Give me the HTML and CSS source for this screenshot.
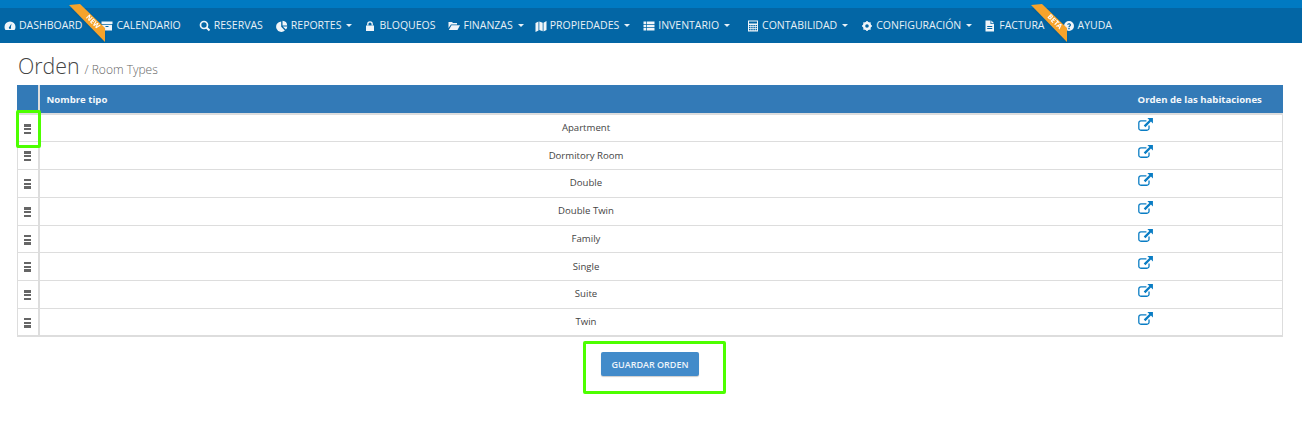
FILE: index.html
```html
<!DOCTYPE html>
<html lang="es">
<head>
<meta charset="utf-8">
<title>Orden</title>
<link rel="stylesheet" href="styles.css">
</head>
<body>
<svg class="defs" width="0" height="0">
<defs>
<symbol id="link" viewBox="0 0 16 14"><path d="M11.800 8v3a2.200 2.200 0 0 1-2.200 2.200H3A2.200 2.200 0 0 1 .8 11V5.400A2.200 2.200 0 0 1 3 3.200h6" fill="none" stroke="currentColor" stroke-width="1.400"/><path d="M10 0h6v6l-2.100-2.100-6 6-1.800-1.800 6-6z" fill="currentColor"/></symbol>
</defs>
</svg>
<div class="strip"></div>
<nav class="nav">
<a class="item i-dash"><svg class="ic" viewBox="0 0 12 12"><path d="M6 1.500a5.500 5.500 0 0 0-5.500 5.500c0 1.200.4 2.200 1 3h9c.6-.8 1-1.800 1-3A5.500 5.500 0 0 0 6 1.500zM6 9a1.200 1.200 0 0 1-.6-2.200L7.500 3.500 6.900 7.200A1.200 1.200 0 0 1 6 9z" fill="currentColor" fill-rule="evenodd"/></svg>DASHBOARD</a>
<a class="item i-cal"><svg class="ic" viewBox="0 0 12 12"><path d="M.5 1.500h11v2.500H.5zM1 4.800h10v5.700H1zM4.500 6v1h3V6z" fill="currentColor" fill-rule="evenodd"/></svg>CALENDARIO</a>
<a class="item i-res"><svg class="ic" viewBox="0 0 12 12"><circle cx="5" cy="5" r="3.500" fill="none" stroke="currentColor" stroke-width="1.700"/><path d="M7.500 7.500l3 3" stroke="currentColor" stroke-width="2"/></svg>RESERVAS</a>
<a class="item i-rep"><svg class="ic" viewBox="0 0 12 12"><path d="M5.200 1.500v5.300l3.700 3.700A5.200 5.200 0 1 1 5.200 1.500zM6.500.8a5 5 0 0 1 4.700 4.700H6.500zM6.800 6.500h4.500a5 5 0 0 1-1.400 3.100z" fill="currentColor"/></svg>REPORTES<i class="caret"></i></a>
<a class="item i-blo"><svg class="ic" viewBox="0 0 12 12"><path d="M2 5.500h8v5.500H2z" fill="currentColor"/><path d="M3.800 5.500V4a2.200 2.200 0 0 1 4.400 0v1.500" fill="none" stroke="currentColor" stroke-width="1.300"/></svg>BLOQUEOS</a>
<a class="item i-fin"><svg class="ic" viewBox="0 0 12 12"><path d="M.5 2h3.500l1 1h4v1.500H3L.5 8zM3.500 5.200H12L9.500 10H.8z" fill="currentColor"/></svg>FINANZAS<i class="caret"></i></a>
<a class="item i-pro"><svg class="ic" viewBox="0 0 12 12"><path d="M.5 3l3-1.500v9L.5 12zM4.300 1.500l3.400 1.300v8.500l-3.400-1.200zM8.500 2.800L11.500 1v9l-3 1.500z" fill="currentColor"/></svg>PROPIEDADES<i class="caret"></i></a>
<a class="item i-inv"><svg class="ic" viewBox="0 0 12 12"><path d="M.5 1.500h2.800v2.500H.5zM4 1.500h7.500v2.500H4zM.5 4.800h2.800v2.500H.5zM4 4.800h7.500v2.500H4zM.5 8h2.800v2.500H.5zM4 8h7.500v2.500H4z" fill="currentColor"/></svg>INVENTARIO<i class="caret"></i></a>
<a class="item i-con"><svg class="ic" viewBox="0 0 12 12"><path d="M1 .5h10v11H1zM2 1.500v2h8v-2zM2 5v1.200h1.500V5zM4.200 5v1.200h1.500V5zM6.400 5v1.200h1.500V5zM8.600 5v1.200H10V5zM2 7v1.200h1.500V7zM4.200 7v1.200h1.500V7zM6.400 7v1.200h1.500V7zM8.600 7v1.200H10V7zM2 9v1.200h1.500V9zM4.200 9v1.200h1.500V9zM6.400 9v1.200h1.500V9zM8.600 9v1.200H10V9z" fill="currentColor" fill-rule="evenodd"/></svg>CONTABILIDAD<i class="caret"></i></a>
<a class="item i-cfg"><svg class="ic" viewBox="0 0 12 12"><circle cx="6" cy="6" r="3" fill="none" stroke="currentColor" stroke-width="2.400"/><path d="M6 1v10M1 6h10M2.500 2.500l7 7M9.500 2.500l-7 7" stroke="currentColor" stroke-width="1.500" stroke-dasharray="2 6"/></svg>CONFIGURACIÓN<i class="caret"></i></a>
<a class="item i-fac"><svg class="ic" viewBox="0 0 12 12"><path d="M1.500.5h5v3.500H10v7.500H1.500zM7.300.5L10 3.200H7.300zM3.200 6v1h5.100V6zM3.200 8v1h5.100V8z" fill="currentColor" fill-rule="evenodd"/></svg>FACTURA</a>
<a class="item i-ayu"><svg class="ic" viewBox="0 0 12 12"><path d="M6 1a5 5 0 1 0 0 10A5 5 0 0 0 6 1zM5.300 9.200V8h1.400v1.200zM6.700 7.200H5.300c0-1.500 1.400-1.500 1.400-2.300 0-.8-1.100-.8-1.700 0l-.9-.7c1.100-1.500 3.900-1.100 3.900.7 0 1.300-1.300 1.300-1.300 2.300z" fill="currentColor" fill-rule="evenodd"/></svg>AYUDA</a>
<span class="shadow s-new"><span class="ribbon"><span class="rib-text">NEW</span></span></span>
<span class="shadow s-beta"><span class="ribbon"><span class="rib-text">BETA</span></span></span>
</nav>
<main class="page">
<h1 class="title">Orden <small>/ Room Types</small></h1>
<table class="grid">
<thead><tr><th class="h"></th><th class="name-h">Nombre tipo</th><th class="ord-h">Orden de las habitaciones</th></tr></thead>
<tbody>
<tr><td class="h"><i class="bars"></i></td><td class="name">Apartment</td><td class="ord"><svg class="ext"><use href="#link"/></svg></td></tr>
<tr><td class="h"><i class="bars"></i></td><td class="name">Dormitory Room</td><td class="ord"><svg class="ext"><use href="#link"/></svg></td></tr>
<tr><td class="h"><i class="bars"></i></td><td class="name">Double</td><td class="ord"><svg class="ext"><use href="#link"/></svg></td></tr>
<tr><td class="h"><i class="bars"></i></td><td class="name">Double Twin</td><td class="ord"><svg class="ext"><use href="#link"/></svg></td></tr>
<tr><td class="h"><i class="bars"></i></td><td class="name">Family</td><td class="ord"><svg class="ext"><use href="#link"/></svg></td></tr>
<tr><td class="h"><i class="bars"></i></td><td class="name">Single</td><td class="ord"><svg class="ext"><use href="#link"/></svg></td></tr>
<tr><td class="h"><i class="bars"></i></td><td class="name">Suite</td><td class="ord"><svg class="ext"><use href="#link"/></svg></td></tr>
<tr><td class="h"><i class="bars"></i></td><td class="name">Twin</td><td class="ord"><svg class="ext"><use href="#link"/></svg></td></tr>
</tbody>
</table>
<div class="actions"><button class="save">GUARDAR ORDEN</button></div>
</main>
<div class="mark m-handle"></div>
<div class="mark m-save"></div>
</body>
</html>
```
FILE: styles.css
```css
html, body { margin: 0; padding: 0; }
body { background: #fff; font-family: "Open Sans", sans-serif; color: #555; overflow: hidden; height: 436px; position: relative; }
.defs { position: absolute; }
.strip { height: 8px; background: #007ac2; }
.nav { height: 35px; background: #0366a5; display: flex; align-items: center; position: relative; padding-left: 4px; }
.item { display: flex; align-items: center; color: #e8f1f7; font-size: 10.5px; line-height: 35px; white-space: nowrap; }
.ic { width: 12px; height: 12px; margin-right: 3px; flex: none; color: #f0f5f9; }
.caret { width: 0; height: 0; border-left: 3px solid transparent; border-right: 3px solid transparent; border-top: 3px solid #e8f1f7; margin-left: 5px; }
.i-cal { margin-left: 19px; }
.i-res { margin-left: 18px; }
.i-rep { margin-left: 13px; }
.i-blo { margin-left: 12px; }
.i-fin { margin-left: 13px; }
.i-pro { margin-left: 11px; }
.i-inv { margin-left: 13px; }
.i-con { margin-left: 17px; }
.i-cfg { margin-left: 13px; }
.i-fac { margin-left: 12px; }
.i-ayu { margin-left: 18px; }
.shadow { position: absolute; top: -4px; width: 36px; height: 42px; filter: drop-shadow(0 1px 1px rgba(0,0,0,.12)); }
.s-new { left: 69px; }
.s-beta { left: 1031px; }
.ribbon { display: block; position: relative; width: 36px; height: 38px; background: #f6a32b; clip-path: polygon(0 1px, 11px 0, 36px 24px, 36px 38px); }
.rib-text { position: absolute; left: 8px; top: 13px; width: 32px; text-align: center; color: #fff; font-size: 7px; font-weight: 700; line-height: 9px; transform: rotate(45deg); }
.page { padding: 0 19px 0 17px; }
.title { display: flex; align-items: baseline; gap: 5px; box-sizing: border-box; height: 42px; margin: 0; font-weight: 300; font-size: 21.300px; line-height: 30px; padding: 8px 0 0 1px; color: #444; }
.title small { font-size: 12px; color: #666; font-weight: 300; }
.grid { width: 1266px; border-collapse: collapse; table-layout: fixed; font-size: 9.600px; }
.grid th { background: #337ab7; color: #f4f8fb; font-size: 9.600px; font-weight: 700; text-align: left; height: 29px; padding: 0 7px; border-bottom: 2px solid #ddd; box-sizing: border-box; }
.grid th.h { width: 21px; border-right: 2px solid #ddd; border-left: 1px solid #337ab7; }
.grid th.ord-h { width: 150px; padding-left: 5px; }
.grid td { height: 27.750px; box-sizing: border-box; border-bottom: 1px solid #ddd; padding: 0; }
.grid tr:last-child td { border-bottom-width: 2px; }
td.h { border-left: 1px solid #ddd; border-right: 2px solid #ddd; vertical-align: top; }
td.name { text-align: center; color: #444; padding-bottom: 1px !important; }
td.ord { border-right: 1px solid #ddd; vertical-align: top; padding: 3px 0 0 5px !important; }
.bars { display: block; width: 7px; height: 10px; margin: 9px 0 0 6px; background: linear-gradient(#666 0 2.500px, transparent 2.500px 3.800px, #666 3.800px 6.200px, transparent 6.200px 7.500px, #666 7.500px 10px); }
.ext { display: block; width: 15px; height: 13px; color: #0a7dc4; }
.actions { display: flex; justify-content: center; padding: 15px 0 0 0; }
.save { width: 98px; height: 24px; border: 0; border-radius: 2px; background: #428bca; color: #eef4fa; font-family: "Open Sans", sans-serif; font-size: 9px; font-weight: 600; box-shadow: 0 1px 1px rgba(0,0,0,.2); padding: 0; }
.mark { position: absolute; border: 3px solid #4dff00; box-sizing: border-box; border-radius: 2px; }
.m-handle { left: 16px; top: 110px; width: 25px; height: 38px; }
.m-save { left: 583px; top: 341px; width: 143px; height: 53px; }
```
